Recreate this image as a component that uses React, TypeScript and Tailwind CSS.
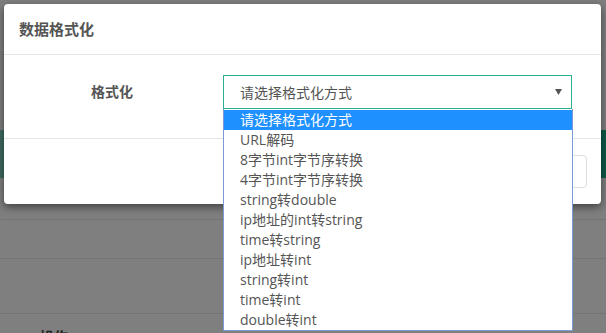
const FONT = "font-['Open_Sans','Noto_Sans_CJK_SC',sans-serif]"

const options = [
  '请选择格式化方式',
  'URL解码',
  '8字节int字节序转换',
  '4字节int字节序转换',
  'string转double',
  'ip地址的int转string',
  'time转string',
  'ip地址转int',
  'string转int',
  'time转int',
  'double转int',
]

const App = () => {
  return (
    <div className={`relative w-[606px] h-[333px] overflow-hidden bg-[#7f7f7f] ${FONT}`}>
      {/* page behind the overlay */}
      <div className="h-[130px]" />
      <div className="h-[48px] flex">
        <div className="w-[8px] bg-[#3e6b61]" />
        <div className="flex-1" />
        <div className="w-[6px] bg-[#0f5947]" />
      </div>
      <div className="h-[42px] border-b border-[#747474]" />
      <div className="h-[39px] border-b border-[#747474]" />
      <div className="h-[55px] border-b border-[#747474]" />
      <div className="pl-[40px] pt-[12px] text-[14px] font-bold text-[#222]">操作</div>

      {/* modal */}
      <div className="absolute left-[4px] top-[4px] w-[597px] h-[200px] bg-white rounded-[4px] shadow-[0_3px_9px_rgba(0,0,0,0.5)] flex flex-col">
        <div className="h-[51px] border-b border-[#e5e5e5] px-[15px] flex items-center">
          <h4 className="text-[15px] font-bold text-[#555] leading-none">数据格式化</h4>
        </div>
        <div className="h-[84px] border-b border-[#e5e5e5] pt-[20px] flex">
          <label className="w-[219px] pr-[90px] text-right text-[14px] font-bold text-[#555] leading-[34px]">
            格式化
          </label>
          <div className="w-[349px] h-[34px] border border-[#2ab08f] flex items-center justify-between pl-[16px] pr-[9px] text-[14px] text-[#555]">
            <span>请选择格式化方式</span>
            <svg width="7" height="6" viewBox="0 0 7 6">
              <path d="M0 0h7L3.5 6z" fill="#555" />
            </svg>
          </div>
        </div>
        <div className="flex-1 flex justify-end items-start pt-[16px] pr-[14px]">
          <button className="w-[70px] h-[33px] border border-[#ddd] rounded-[4px] bg-white text-[14px] text-[#333]">
            关闭
          </button>
        </div>
      </div>

      {/* open select dropdown */}
      <ul className="absolute left-[223px] top-[109px] w-[350px] bg-white border border-t-0 border-[#7a9bd6] pt-px">
        {options.map((o, i) => (
          <li
            key={o}
            className={`h-[20px] pl-[16px] text-[14px] leading-[20px] ${
              i === 0 ? 'bg-[#1e90ff] text-white' : 'text-[#555]'
            }`}
          >
            {o}
          </li>
        ))}
      </ul>
    </div>
  )
}

export default App
